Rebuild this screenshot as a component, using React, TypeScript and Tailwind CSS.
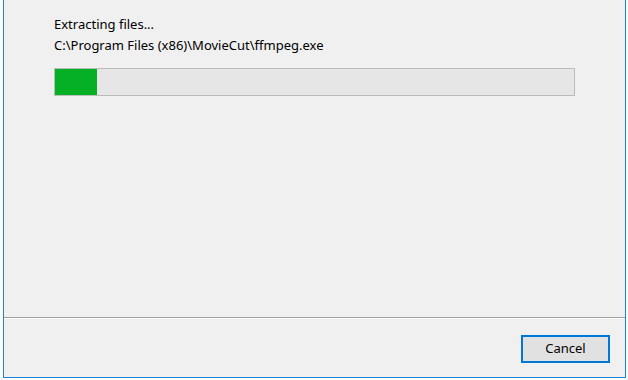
export default function App() {
  const font = { fontFamily: '"Noto Sans", "Segoe UI", sans-serif' };
  return (
    <div className="w-[628px] h-[380px] bg-white pl-[3px] pr-[2px] pb-[2px] flex" style={font}>
      <div className="flex-1 flex flex-col bg-[#f0f0f0] border-l border-r border-b border-l-[#1883d7] border-r-[#1883d7] border-b-[#1883d7]">
        <div className="h-[317px] pl-[50px] pt-[14px] text-[13px] leading-[21px] text-black">
          <div>Extracting files...</div>
          <div>C:\Program Files (x86)\MovieCut\ffmpeg.exe</div>
          <div className="mt-[12px] w-[521px] h-[28px] border border-[#bcbcbc] bg-[#e6e6e6] flex">
            <div className="w-[42px] h-full bg-[#06b025]" />
          </div>
        </div>
        <div className="h-px bg-[#a0a0a0]" />
        <div className="h-px bg-white" />
        <div className="flex-1 flex justify-end items-start pt-[16px] pr-[15px]">
          <button className="w-[89px] h-[28px] border-2 border-[#0078d7] bg-[#e1e1e1] text-[13px] text-black flex items-center justify-center">
            Cancel
          </button>
        </div>
      </div>
    </div>
  );
}
